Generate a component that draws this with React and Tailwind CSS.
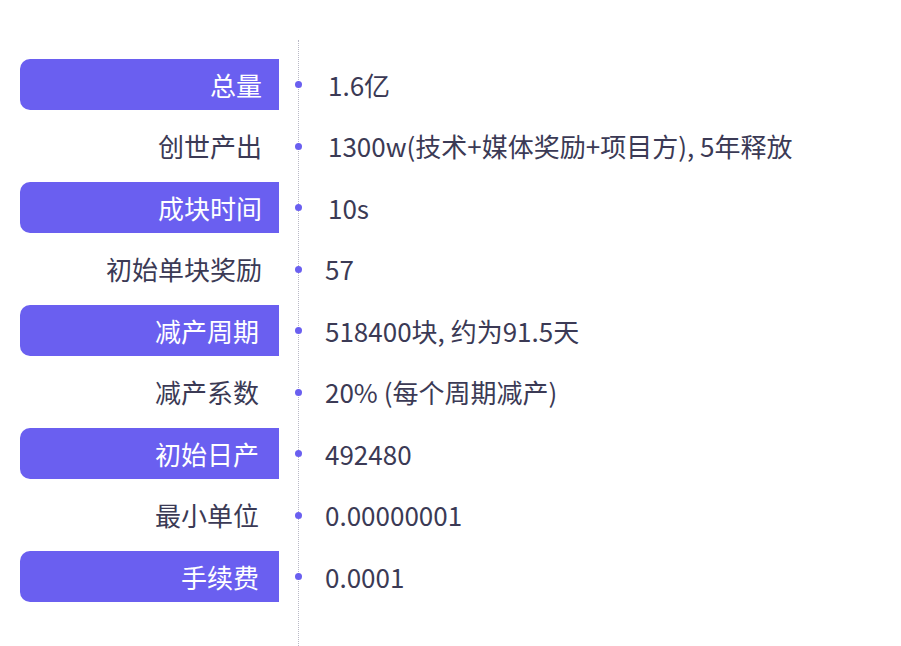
import React from "react";

const rows = [
  { label: "总量", value: "1.6亿", bar: true, shift: true },
  { label: "创世产出", value: "1300w(技术+媒体奖励+项目方), 5年释放", shift: true },
  { label: "成块时间", value: "10s", bar: true, shift: true },
  { label: "初始单块奖励", value: "57", labelShift: true },
  { label: "减产周期", value: "518400块, 约为91.5天", bar: true },
  { label: "减产系数", value: "20% (每个周期减产)" },
  { label: "初始日产", value: "492480", bar: true },
  { label: "最小单位", value: "0.00000001" },
  { label: "手续费", value: "0.0001", bar: true },
];

const font = {
  fontFamily: '"Noto Sans CJK SC", "Noto Sans", sans-serif',
};

const App = () => {
  return (
    <div
      className="flex h-[646px] w-[901px] bg-white pl-[20px] text-[26px] leading-none text-[#3b3a55]"
      style={font}
    >
      {/* labels */}
      <div className="flex w-[259px] flex-col pt-[54px]">
        {rows.map((row) => (
          <div key={row.label} className="flex h-[61.5px] items-center">
            <div
              className={`flex h-[51px] w-full items-center justify-end rounded-l-[10px] ${
                row.shift || row.labelShift ? "pr-[17px]" : "pr-[20px]"
              } ${row.bar ? "bg-[#6a5ff0] text-white" : ""}`}
            >
              {row.label}
            </div>
          </div>
        ))}
      </div>

      {/* timeline */}
      <div className="ml-[19px] mt-[40px] flex flex-col border-l border-dotted border-[#b9b9c6] pt-[14px]">
        {rows.map((row) => (
          <div key={row.label} className="flex h-[61.5px] items-center">
            <span className="-ml-[4px] h-[7px] w-[7px] rounded-full bg-[#6a5ff0]" />
          </div>
        ))}
      </div>

      {/* values */}
      <div className="flex flex-col pt-[54px]">
        {rows.map((row) => (
          <div
            key={row.label}
            className={`flex h-[61.5px] items-center whitespace-pre ${
              row.shift ? "pl-[26px]" : "pl-[23px]"
            }`}
          >
            {row.value}
          </div>
        ))}
      </div>
    </div>
  );
};

export default App;
